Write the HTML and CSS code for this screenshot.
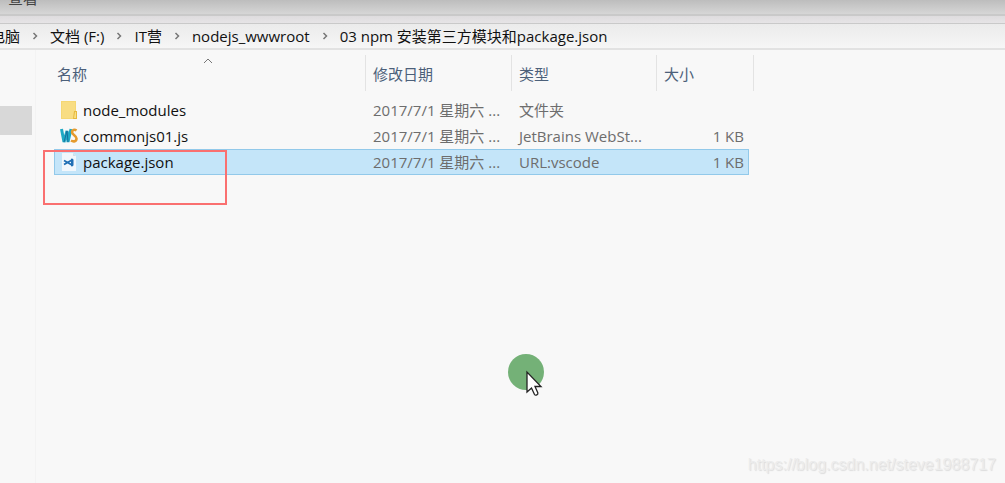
FILE: index.html
```
<!DOCTYPE html>
<html lang="zh-CN">
<head>
  <meta charset="UTF-8" />
  <meta name="viewport" content="width=device-width, initial-scale=1.0"/>
  <title>03 npm 安装第三方模块和package.json</title>
  <link rel="stylesheet" href="styles.css">
</head>
<body>
  <div class="ribbon">
    <button class="ribbon-tab" type="button">查看</button>
  </div>

  <nav class="address">
    <a href="#">电脑</a>
    <svg class="chevron" viewBox="0 0 5 8"><path d="M1 1l3 3-3 3"/></svg>
    <a href="#">文档 (F:)</a>
    <svg class="chevron" viewBox="0 0 5 8"><path d="M1 1l3 3-3 3"/></svg>
    <a href="#">IT营</a>
    <svg class="chevron" viewBox="0 0 5 8"><path d="M1 1l3 3-3 3"/></svg>
    <a href="#">nodejs_wwwroot</a>
    <svg class="chevron" viewBox="0 0 5 8"><path d="M1 1l3 3-3 3"/></svg>
    <a href="#">03 npm 安装第三方模块和package.json</a>
  </nav>

  <div class="explorer">
    <aside class="sidebar">
      <div class="sidebar-current"></div>
    </aside>

    <main class="content">
      <table class="files">
        <thead>
          <tr>
            <th class="col-name">名称
              <svg class="sort" viewBox="0 0 10 6"><path d="M1 5l4-4 4 4"/></svg>
            </th>
            <th class="col-date">修改日期</th>
            <th class="col-type">类型</th>
            <th class="col-size">大小</th>
            <td class="col-end"></td>
          </tr>
        </thead>
        <tbody>
          <tr>
            <td class="name">
              <div class="file">
                <svg class="icon" viewBox="0 0 18 20">
                  <path fill="#f5d774" d="M1 1h15v10h1v8H1z"/>
                  <path fill="#fae18d" d="M2 2h13v16H2z" opacity=".6"/>
                  <path fill="#e6b93f" d="M13 19l1-8h3v8z"/>
                  <path fill="#f9df83" d="M14 18l1-6h1v6z"/>
                </svg>
                <span>node_modules</span>
              </div>
            </td>
            <td>2017/7/1 星期六 ...</td>
            <td>文件夹</td>
            <td class="size"></td>
            <td></td>
          </tr>
          <tr>
            <td class="name">
              <div class="file">
                <svg class="icon" viewBox="0 0 18 20">
                  <path fill="none" stroke="#1fa9c4" stroke-width="3" d="M1.500 3l2.500 13L7 5l1 11L11 3"/>
                  <path fill="none" stroke="#176f9e" stroke-width="1" d="M4 16L7 5l1 11"/>
                  <path fill="none" stroke="#e59a2c" stroke-width="2.600" d="M16.500 4.500c-2-1.500-4.500-.5-4.500 1.500 0 3 4.500 3.500 4.500 6.500s-3 3.500-5.500 2"/>
                </svg>
                <span>commonjs01.js</span>
              </div>
            </td>
            <td>2017/7/1 星期六 ...</td>
            <td>JetBrains WebSt...</td>
            <td class="size">1 KB</td>
            <td></td>
          </tr>
          <tr class="selected">
            <td class="name">
              <div class="file">
                <svg class="icon" viewBox="0 0 18 20">
                  <path fill="#f1f7fc" d="M2 1h11l3 3v15H2z"/>
                  <path fill="#cfdfec" d="M13 1v3h3z"/>
                  <path fill="none" stroke="#1f6fb5" stroke-width="1.800" d="M4 8.500l8 4.500V8l-8 4.500"/>
                  <path fill="#1f6fb5" d="M11 6.500l2.500 1v6l-2.500 1z"/>
                </svg>
                <span>package.json</span>
              </div>
            </td>
            <td>2017/7/1 星期六 ...</td>
            <td>URL:vscode</td>
            <td class="size">1 KB</td>
            <td></td>
          </tr>
        </tbody>
      </table>
    </main>
  </div>

  <div class="highlight"></div>

  <svg class="pointer" viewBox="0 0 38 44">
    <circle cx="18" cy="19" r="18" fill="#74b177"/>
    <path d="M19 19v20l4.500-4 3 6.500c1 1.500 4 0 3.300-1.700L27 33.500h6z" fill="#fff" stroke="#222" stroke-width="1.300"/>
  </svg>

  <div class="watermark">https://blog.csdn.net/steve1988717</div>
</body>
</html>
```
FILE: styles.css
```
* {
  box-sizing: border-box;
}

body {
  margin: 0;
  min-height: 100vh;
  display: flex;
  flex-direction: column;
  position: relative;
  overflow: hidden;
  background-color: #f8f8f8;
  color: #111;
  font-family: "Open Sans", "Noto Sans CJK SC", sans-serif;
  font-size: 15px;
  line-height: 20px;
}

.ribbon {
  display: flex;
  align-items: flex-end;
  height: 24px;
  padding: 0 8px 15px;
  overflow: hidden;
  border-bottom: 1px solid #c9c9c9;
  background: linear-gradient(#bdbdbd, #d6d6d6 14px, #c9c9c9 14px, #c9c9c9 16px, #dedcde 16px, #e6e4e6);
}

.ribbon-tab {
  padding: 0;
  border: 0;
  background: none;
  color: #444;
  font: inherit;
}

.address {
  display: flex;
  align-items: center;
  gap: 12px;
  height: 26px;
  margin-left: -10px;
  border-bottom: 2px solid #e2e2e2;
  background: linear-gradient(#ebebeb, #f6f6f6);
  white-space: nowrap;
}

.address a {
  color: #111;
  text-decoration: none;
}

.chevron {
  flex: none;
  width: 6px;
  height: 8px;
  fill: none;
  stroke: #777;
  stroke-width: 1.5;
}

.explorer {
  flex: 1;
  display: flex;
}

.sidebar {
  width: 36px;
  padding-top: 56px;
  border-right: 1px solid #f3f3f3;
}

.sidebar-current {
  width: 32px;
  height: 29px;
  background-color: #d8d8d8;
}

.content {
  flex: 1;
  padding: 5px 18px 0;
}

.files {
  table-layout: fixed;
  width: 700px;
  border-collapse: separate;
  border-spacing: 0;
  color: #6d6d6d;
  white-space: nowrap;
}

.files th,
.files td {
  padding: 0 0 0 7px;
  text-align: left;
  font-weight: normal;
}

.files th {
  position: relative;
  height: 36px;
  padding-top: 2px;
  border-right: 1px solid #e3e3e3;
  color: #4c607a;
}

.files tbody::before {
  content: "";
  display: block;
  height: 6px;
}

.files tbody td {
  height: 26px;
}

.files th.col-name {
  width: 312px;
  padding-left: 3px;
}

.col-date {
  width: 146px;
}

.col-type {
  width: 145px;
}

.files .col-end {
  width: 5px;
  padding: 0;
  border-right: 1px solid #e3e3e3;
}

.files th.col-size {
  border-right: 0;
}

.sort {
  position: absolute;
  top: 3px;
  left: 149px;
  width: 10px;
  height: 6px;
  fill: none;
  stroke: #777;
}

.files td.name {
  padding-left: 6px;
  color: #111;
}

.file {
  display: flex;
  align-items: center;
  gap: 5px;
}

.icon {
  width: 18px;
  height: 20px;
}

.files td.size {
  padding: 0 5px 0 0;
  text-align: right;
}

.selected td:not(:last-child) {
  border: solid #92c9ea;
  border-width: 1px 0;
  background-color: #c4e5f9;
}

.selected td.name {
  border-left-width: 1px;
  padding-left: 5px;
}

.selected td.size {
  border-right-width: 1px;
  padding-right: 4px;
}

/* red frame drawn over the file list */
.highlight {
  position: absolute;
  top: 150px;
  left: 43px;
  width: 184px;
  height: 55px;
  border: 2px solid #fa7070;
}

.pointer {
  position: absolute;
  top: 353px;
  left: 508px;
  width: 38px;
  height: 44px;
}

.watermark {
  position: absolute;
  right: 9px;
  bottom: 8px;
  color: #ececec;
  font-family: "Liberation Sans", sans-serif;
  font-size: 16px;
  text-shadow: 1px 1px 1px #dcdcdc;
}
```
